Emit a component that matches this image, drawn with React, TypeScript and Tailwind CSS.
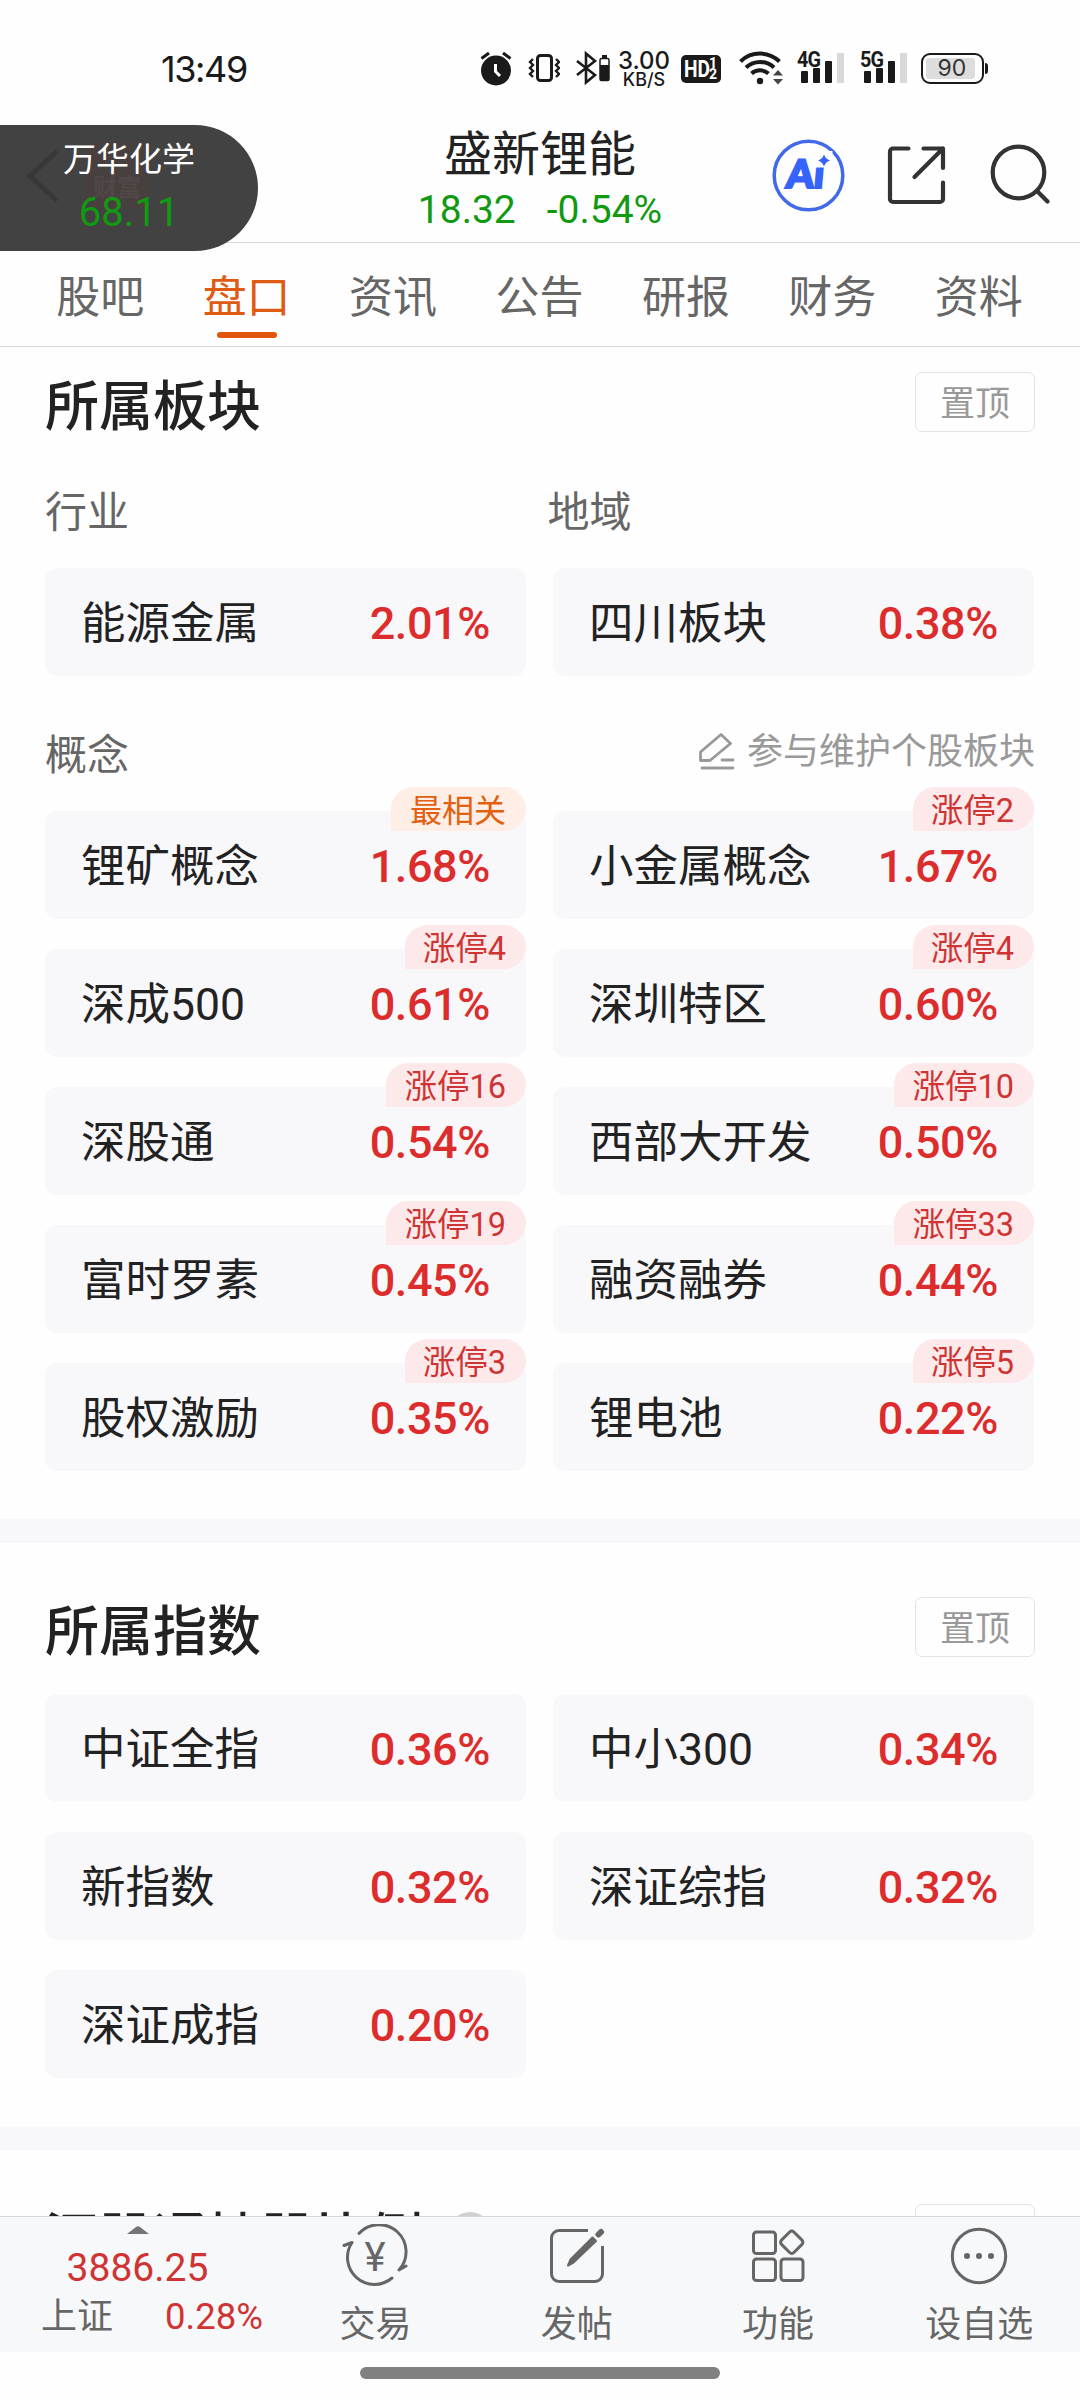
import type { ReactNode } from "react";

interface Board {
  name: string;
  change: string;
  tag?: string;
  hot?: boolean;
}

const TABS = ["股吧", "盘口", "资讯", "公告", "研报", "财务", "资料"];

const CONCEPTS: Board[] = [
  { name: "锂矿概念", change: "1.68%", tag: "最相关", hot: true },
  { name: "小金属概念", change: "1.67%", tag: "涨停2" },
  { name: "深成500", change: "0.61%", tag: "涨停4" },
  { name: "深圳特区", change: "0.60%", tag: "涨停4" },
  { name: "深股通", change: "0.54%", tag: "涨停16" },
  { name: "西部大开发", change: "0.50%", tag: "涨停10" },
  { name: "富时罗素", change: "0.45%", tag: "涨停19" },
  { name: "融资融券", change: "0.44%", tag: "涨停33" },
  { name: "股权激励", change: "0.35%", tag: "涨停3" },
  { name: "锂电池", change: "0.22%", tag: "涨停5" },
];

const INDEXES: Board[] = [
  { name: "中证全指", change: "0.36%" },
  { name: "中小300", change: "0.34%" },
  { name: "新指数", change: "0.32%" },
  { name: "深证综指", change: "0.32%" },
  { name: "深证成指", change: "0.20%" },
];

function Signal({ label }: { label: string }) {
  return (
    <div className="relative h-[34px] w-[47px]">
      <span className="absolute left-0 top-px origin-left scale-x-90 font-['Roboto'] text-[22px] font-bold leading-[17px] tracking-[-1px]">
        {label}
      </span>
      <div className="flex h-[33px] items-end gap-[5.5px] pl-[4px]">
        <i className="h-[12px] w-[6.5px] rounded-[1px] bg-[#1a1a1a]" />
        <i className="h-[15px] w-[6.5px] rounded-[1px] bg-[#1a1a1a]" />
        <i className="h-[22px] w-[6.5px] rounded-[1px] bg-[#1a1a1a]" />
        <i className="h-[30px] w-[6.5px] rounded-[1px] bg-[#d9d9d9]" />
      </div>
    </div>
  );
}

function StatusBar() {
  return (
    <div className="flex h-[124px] items-start pl-[161px] pt-[50px] text-[#1a1a1a]">
      <span className="w-[319px] font-['Inter'] text-[36px] leading-[38px] tracking-[-1.4px]">13:49</span>
      <svg className="mt-px" width="32" height="36" viewBox="0 0 32 36">
        <circle cx="16" cy="19.5" r="15" fill="#1a1a1a" />
        <path d="M1.5 7.5 9 2M30.5 7.5 23 2" stroke="#1a1a1a" strokeWidth="3" />
        <path d="M15.5 13v7.5l4.5 4.5" fill="none" stroke="#fff" strokeWidth="3" />
      </svg>
      <svg className="ml-[16px] mt-[3px]" width="32" height="30" viewBox="0 0 32 30" fill="none" stroke="#1a1a1a">
        <rect x="9.5" y="2.5" width="14" height="25" rx="3" strokeWidth="3" />
        <path d="M5 6 2 9l3 3-3 3 3 3-3 3 3 3M28 6l3 3-3 3 3 3-3 3 3 3-3 3" strokeWidth="2.4" />
      </svg>
      <svg className="ml-[15px]" width="36" height="36" viewBox="0 0 36 36" fill="none" stroke="#1a1a1a">
        <path d="m2 11 18 14-9 7.5V3.5l9 7.5L2 25" strokeWidth="2.6" />
        <rect x="25" y="8.5" width="9" height="22" rx="1.5" strokeWidth="1.5" />
        <path d="M25 15h9v16h-9zM27 5h5v3h-5z" fill="#1a1a1a" stroke="none" />
      </svg>
      <div className="ml-[7px] flex w-[52px] flex-col items-center font-['Inter'] font-medium">
        <span className="text-[24px] leading-[21px]">3.00</span>
        <span className="text-[18px] leading-[18px]">KB/S</span>
      </div>
      <div className="ml-[11px] mt-[5px] flex h-[28px] w-[40px] items-center rounded-[5px] bg-[#1a1a1a] pl-[3px] font-['Roboto'] font-bold text-white">
        <span className="w-[25px] origin-left scale-x-80 text-[24px] leading-none">HD</span>
        <span className="flex flex-col text-[14px] leading-[11px]">
          <i className="not-italic">1</i>
          <i className="not-italic">2</i>
        </span>
      </div>
      <svg className="ml-[18px]" width="46" height="36" viewBox="0 0 46 36" fill="none" stroke="#1a1a1a">
        <path d="M1.5 11.5a28 28 0 0 1 39 0M7 17.5a20.5 20.5 0 0 1 28 0M12.5 23.5a13 13 0 0 1 17 0" strokeWidth="4" />
        <circle cx="21" cy="31" r="3.2" fill="#1a1a1a" stroke="none" />
        <path d="m39 20 5 5.5H34zM39 34.5l5-5.5H34z" fill="#444" stroke="none" />
      </svg>
      <div className="ml-[12px]"><Signal label="4G" /></div>
      <div className="ml-[16px]"><Signal label="5G" /></div>
      <div className="ml-[14px] mt-[3px] flex items-center">
        <div className="flex h-[31px] w-[63px] items-center rounded-[9px] border-2 border-[#1a1a1a] pl-[3px]">
          <span className="flex h-[21px] w-[49px] items-center justify-center rounded-[3px] bg-[#ddd] pl-[3px] font-['Inter'] text-[23px] leading-none text-[#333]">
            90
          </span>
        </div>
        <i className="ml-[1px] h-[11px] w-[2.5px] rounded-r bg-[#1a1a1a]" />
      </div>
    </div>
  );
}

function FloatingQuote() {
  return (
    <div className="absolute left-0 top-[125px] h-[126px] w-[258px] overflow-hidden rounded-r-full bg-[#424242]">
      <svg className="absolute left-[24px] top-[22px]" width="38" height="58" viewBox="0 0 38 58">
        <path d="M33 4 6 29l27 25" fill="none" stroke="#383838" strokeWidth="5" />
      </svg>
      <div className="absolute left-[84px] top-[17px] flex h-[67px] w-[66px] items-end justify-center rounded-[12px] bg-[#48403f] pb-[9px] text-[24px] font-bold leading-none text-[#504847]">
        财富
      </div>
      <div className="relative flex flex-col items-center pt-[14px]">
        <span className="text-[33px] leading-[42px] text-white">万华化学</span>
        <span className="mt-[10px] text-[40px] leading-[44px] text-[#119911]">68.11</span>
      </div>
    </div>
  );
}

function Header() {
  return (
    <div className="flex h-[119px] justify-end border-b border-[#d8d8d8]">
      <div className="flex w-[360px] flex-col items-center">
        <span className="mt-[3px] text-[48px] leading-[56px] text-[#222]">盛新锂能</span>
        <span className="mt-[5px] flex gap-[31px] text-[39px] leading-[44px] text-[#119911]">
          <span>18.32</span>
          <span>-0.54%</span>
        </span>
      </div>
      <div className="flex w-[360px] pl-[51px] pt-[14px]">
        <svg width="74" height="74" viewBox="0 0 74 74">
          <circle cx="37.5" cy="37.5" r="34.3" fill="none" stroke="#4169e8" strokeWidth="3.5" />
          <text x="19" y="50" fontFamily="Lato" fontSize="39" fontWeight="900" fill="#3563fb" stroke="#3563fb" strokeWidth="2.2" transform="skewX(-5)">
            Ai
          </text>
          <path d="M43.5 13h18v16.500h-18z" fill="#fff" />
          <path d="M53 16.500q1.500 4.500 6 6-4.500 1.500-6 6-1.500-4.500-6-6 4.500-1.500 6-6z" fill="#3563fb" />
        </svg>
        <svg className="ml-[41px] mt-[6px]" width="62" height="62" viewBox="0 0 62 62" fill="none" stroke="#333" strokeWidth="4.2" strokeLinecap="round" strokeLinejoin="round">
          <path d="M22.5 4.500H7A3 3 0 0 0 4 7.500V55a3 3 0 0 0 3 3h47a3 3 0 0 0 3-3V38.500M37.500 4.500H57V24M57 4.500 28.500 33" />
        </svg>
        <svg className="ml-[40px] mt-[5px]" width="66" height="66" viewBox="0 0 66 66" fill="none" stroke="#333" strokeWidth="4.2" strokeLinecap="round">
          <circle cx="30.5" cy="29.5" r="25.8" />
          <path d="m49 48 10.500 10.500" />
        </svg>
      </div>
    </div>
  );
}

function TabBar() {
  return (
    <div className="flex h-[104px] border-b border-[#d8d8d8] pl-[27px] pr-[28px]">
      {TABS.map((tab) => {
        const active = tab === "盘口";
        return (
          <div key={tab} className="flex flex-1 flex-col items-center pt-[27px]">
            <span className={active ? "text-[44px] leading-[56px] text-[#df5a12]" : "text-[44px] leading-[56px] text-[#666]"}>
              {tab}
            </span>
            {active && <i className="mt-[6px] h-[6px] w-[60px] rounded-full bg-[#e2560b]" />}
          </div>
        );
      })}
    </div>
  );
}

function SectionTitle({ title, extra }: { title: string; extra?: ReactNode }) {
  return (
    <div className="flex h-[60px] items-center">
      <h2 className="pt-[12px] text-[54px] font-medium leading-none text-[#222]">{title}</h2>
      {extra}
      <button className="ml-auto flex h-[60px] w-[120px] items-center justify-center rounded-[7px] border border-[#e3e3e3] pt-[4px] text-[35px] leading-none text-[#999]">
        置顶
      </button>
    </div>
  );
}

function BoardCard({ board }: { board: Board }) {
  return (
    <div className="relative flex h-[108px] items-center justify-between rounded-[12px] bg-[#f8f8fb] px-[36px]">
      <span className="pt-[5px] text-[44.5px] leading-none text-[#222]">{board.name}</span>
      <span className="pt-[2px] text-[45px] font-medium leading-none tracking-[-0.4px] text-[#dd2c2c]">{board.change}</span>
      {board.tag && (
        <span
          className={
            board.hot
              ? "absolute -top-[24px] right-0 flex h-[44px] items-center rounded-[22px] rounded-bl-none bg-[#ffeee5] pl-[19px] pr-[20px] pt-[4px] text-[32px] leading-none text-[#e2600f]"
              : "absolute -top-[24px] right-0 flex h-[44px] items-center rounded-[22px] rounded-bl-none bg-[#fde9e9] pl-[18px] pr-[20px] pt-[4px] text-[32.5px] leading-none text-[#cf3434]"
          }
        >
          {board.tag}
        </span>
      )}
    </div>
  );
}

function BoardGrid({ boards }: { boards: Board[] }) {
  return (
    <div className="mr-px grid grid-cols-2 gap-x-[27px] gap-y-[30px]">
      {boards.map((b) => (
        <BoardCard key={b.name} board={b} />
      ))}
    </div>
  );
}

function BottomItem({ label, children }: { label: string; children: ReactNode }) {
  return (
    <div className="flex flex-1 flex-col items-center pt-[7px]">
      <svg width="68" height="64" viewBox="0 0 68 64" fill="none" stroke="#666" strokeWidth="3" strokeLinecap="round" strokeLinejoin="round">
        {children}
      </svg>
      <span className="mt-[15px] text-[36px] leading-[44px] text-[#666]">{label}</span>
    </div>
  );
}

function BottomBar() {
  return (
    <div className="flex h-[136px] border-t border-[#d3d5d8] bg-[#f7f8fa]">
      <div className="flex w-[275px] flex-col items-center pt-[9px]">
        <svg width="22" height="8" viewBox="0 0 22 8">
          <path d="M0 8 9 1q2-1.500 4 0l9 7z" fill="#747478" />
        </svg>
        <span className="mt-[12px] text-[39px] leading-[44px] text-[#cf3333]">3886.25</span>
        <div className="mt-[4px] flex w-full items-center pl-[41px] leading-[46px]">
          <span className="text-[36px] text-[#666]">上证</span>
          <span className="ml-[52px] text-[36.5px] text-[#cf3333]">0.28%</span>
        </div>
      </div>
      <BottomItem label="交易">
        <path d="M17 9.500A27 27 0 0 1 57 46l7-4M50 54A27 27 0 0 1 10 18.500L2 21.500" />
        <text x="33" y="47" textAnchor="middle" fontFamily="Roboto" fontSize="40" fill="#666" stroke="none">¥</text>
      </BottomItem>
      <BottomItem label="发帖">
        <path d="M45 6.500H16a7.500 7.500 0 0 0-7.500 7.500v36a7.500 7.500 0 0 0 7.500 7.500h36a7.500 7.500 0 0 0 7.500-7.500V22" strokeLinecap="butt" />
        <path d="m55.500 10.500 2.500-2.500" strokeWidth="6" />
        <path d="m49.500 13.500 3.500 3.500L30.500 38.500l-5.500 3 2.500-6z" fill="#666" strokeWidth="2" />
      </BottomItem>
      <BottomItem label="功能">
        <rect x="9.5" y="8" width="22" height="21.5" rx="3" />
        <rect x="9.5" y="35" width="22" height="21.5" rx="3" />
        <rect x="37" y="35" width="22" height="21.5" rx="3" />
        <rect x="39" y="9.5" width="17.5" height="17.5" rx="3" transform="rotate(45 47.75 18.25)" />
      </BottomItem>
      <BottomItem label="设自选">
        <circle cx="34" cy="32" r="26.7" />
        <path d="M22 32h.01M34 32h.01M46 32h.01" strokeWidth="6" />
      </BottomItem>
    </div>
  );
}

export default function App() {
  return (
    <div className="relative flex h-[2400px] w-[1080px] flex-col overflow-hidden bg-[#fefefe] font-['Roboto','Noto_Sans_CJK_SC',sans-serif]">
      <StatusBar />
      <Header />
      <TabBar />
      <FloatingQuote />

      <main className="min-h-0 flex-1 overflow-hidden">
        <section className="px-[45px] pb-[48px] pt-[25px]">
          <SectionTitle title="所属板块" />
          <div className="mt-[53px] grid grid-cols-2 gap-x-[15px] text-[42px] leading-[56px] text-[#666]">
            <span>行业</span>
            <span>地域</span>
          </div>
          <div className="mt-[27px]">
            <BoardGrid
              boards={[
                { name: "能源金属", change: "2.01%" },
                { name: "四川板块", change: "0.38%" },
              ]}
            />
          </div>
          <div className="mb-[28px] mt-[51px] flex h-[56px] items-center justify-between">
            <span className="text-[42px] text-[#666]">概念</span>
            <span className="flex items-center pb-[7px] text-[36px] leading-[44px] text-[#999]">
              <svg className="mr-[11px]" width="38" height="40" viewBox="0 0 38 40" fill="none" stroke="#999" strokeWidth="2.8" strokeLinejoin="round" strokeLinecap="round">
                <path d="M2.500 20 23 2.500l9.500 9L12 28.500H2.500zM24 28h11M4 36h31" />
              </svg>
              参与维护个股板块
            </span>
          </div>
          <BoardGrid boards={CONCEPTS} />
        </section>
        <div className="h-[24px] bg-[#f8f8fa]" />
        <section className="px-[45px] pb-[48px] pt-[54px]">
          <SectionTitle title="所属指数" />
          <div className="mt-[37px]">
            <BoardGrid boards={INDEXES} />
          </div>
        </section>
        <div className="h-[24px] bg-[#f8f8fa]" />
        <section className="px-[45px] pt-[54px]">
          <SectionTitle
            title="深股通持股比例"
            extra={
              <span className="ml-[25px] flex size-[44px] items-center justify-center rounded-full bg-[#d0d0d3] text-[28px] leading-none text-white">
                ?
              </span>
            }
          />
        </section>
      </main>

      <BottomBar />
      <div className="flex h-[48px] justify-center pt-[15px]">
        <i className="h-[12px] w-[360px] rounded-full bg-[#808080]" />
      </div>
    </div>
  );
}
